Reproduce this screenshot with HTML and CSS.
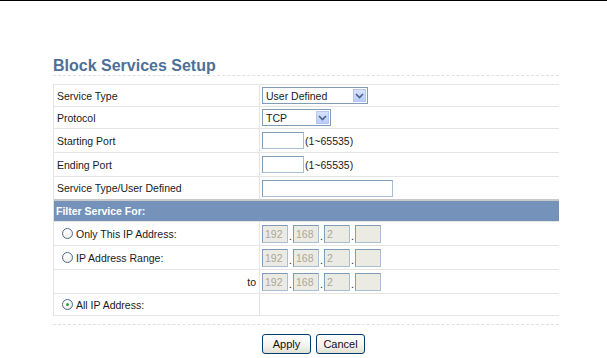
FILE: index.html
```html
<!DOCTYPE html>
<html lang="en">
<head>
  <meta charset="UTF-8" />
  <title>Block Services Setup</title>
  <link rel="stylesheet" href="styles.css">
</head>
<body>

  <div class="page">
    <h1 class="title">Block Services Setup</h1>

    <div class="form">
      <div class="row">
        <div class="label">Service Type</div>
        <div class="field">
          <span class="select-wrap wide">
            <select class="select"><option>User Defined</option></select>
            <span class="arrow"><svg width="9" height="6" viewBox="0 0 9 6"><path d="M1 1 L4.5 4.5 L8 1" fill="none" stroke="#4d6185" stroke-width="1.6"/></svg></span>
          </span>
        </div>
      </div>
      <div class="row">
        <div class="label">Protocol</div>
        <div class="field">
          <span class="select-wrap narrow">
            <select class="select"><option>TCP</option></select>
            <span class="arrow"><svg width="9" height="6" viewBox="0 0 9 6"><path d="M1 1 L4.5 4.5 L8 1" fill="none" stroke="#4d6185" stroke-width="1.6"/></svg></span>
          </span>
        </div>
      </div>
      <div class="row tall">
        <div class="label">Starting Port</div>
        <div class="field"><input class="text port" type="text"><span class="hint">(1~65535)</span></div>
      </div>
      <div class="row tall">
        <div class="label">Ending Port</div>
        <div class="field"><input class="text port" type="text"><span class="hint">(1~65535)</span></div>
      </div>
      <div class="row tall last">
        <div class="label">Service Type/User Defined</div>
        <div class="field"><input class="text long" type="text"></div>
      </div>

      <div class="band">Filter Service For:</div>

      <div class="row tall">
        <div class="label"><span class="radio"></span>Only This IP Address:</div>
        <div class="field ip">
          <input class="octet" value="192" disabled><span class="dot">.</span>
          <input class="octet" value="168" disabled><span class="dot">.</span>
          <input class="octet" value="2" disabled><span class="dot">.</span>
          <input class="octet" value="" disabled>
        </div>
      </div>
      <div class="row tall">
        <div class="label"><span class="radio"></span>IP Address Range:</div>
        <div class="field ip">
          <input class="octet" value="192" disabled><span class="dot">.</span>
          <input class="octet" value="168" disabled><span class="dot">.</span>
          <input class="octet" value="2" disabled><span class="dot">.</span>
          <input class="octet" value="" disabled>
        </div>
      </div>
      <div class="row tall">
        <div class="label to">to</div>
        <div class="field ip">
          <input class="octet" value="192" disabled><span class="dot">.</span>
          <input class="octet" value="168" disabled><span class="dot">.</span>
          <input class="octet" value="2" disabled><span class="dot">.</span>
          <input class="octet" value="" disabled>
        </div>
      </div>
      <div class="row">
        <div class="label"><span class="radio checked"></span>All IP Address:</div>
        <div class="field"></div>
      </div>
    </div>

    <div class="actions">
      <button class="btn">Apply</button>
      <button class="btn">Cancel</button>
    </div>
  </div>

</body>
</html>
```

FILE: styles.css
```css
body {
  margin: 0;
  border-top: 1px solid #000;
  background: #fff;
  font-family: "Liberation Sans", Arial, sans-serif;
  font-size: 10.5px;
  color: #1a1a1a;
}

.page {
  width: 506px;
  margin: 55px 0 0 53px;
}

.title {
  margin: 0;
  font-size: 16px;
  line-height: 19px;
  font-weight: bold;
  color: #4f6f98;
  border-bottom: 1px dashed #dbe1e8;
}

.form {
  margin-top: 8px;
  border-top: 1px solid #e4e4e4;
  border-left: 1px solid #e4e4e4;
}

.row {
  display: flex;
  height: 21px;
  border-bottom: 1px solid #e4e4e4;
}

.row.tall {
  height: 23px;
}

.row.last {
  height: 22px;
  border-bottom: 2px solid #c9c9c9;
}

.label {
  width: 202px;
  padding-left: 3px;
  border-right: 1px solid #e4e4e4;
  display: flex;
  align-items: center;
}

.label.to {
  justify-content: flex-end;
  padding-right: 3px;
  width: 199px;
}

.field {
  flex: 1;
  padding-left: 2px;
  display: flex;
  align-items: center;
}

.select-wrap {
  position: relative;
  display: inline-block;
  height: 17px;
}

.select-wrap.wide { width: 106px; }
.select-wrap.narrow { width: 69px; }

.select {
  appearance: none;
  -webkit-appearance: none;
  width: 100%;
  height: 17px;
  margin: 0;
  padding: 0 0 0 3px;
  border: 1px solid #7f9db9;
  border-radius: 0;
  background: #fff;
  font-family: inherit;
  font-size: 10.5px;
  color: #1a1a1a;
  box-sizing: border-box;
}

.arrow {
  position: absolute;
  top: 2px;
  right: 2px;
  width: 13px;
  height: 13px;
  background: linear-gradient(#d6e2fe, #b9cdfa);
  border: 1px solid #b5c7ef;
  box-sizing: border-box;
  display: flex;
  align-items: center;
  justify-content: center;
}

.text {
  height: 17px;
  margin: 0;
  padding: 0 2px;
  border: 1px solid #7f9db9;
  border-right-color: #a9bdd4;
  border-bottom-color: #a9bdd4;
  box-sizing: border-box;
  font-family: inherit;
  font-size: 10.5px;
}

.text.port { width: 42px; }
.text.long { width: 131px; }

.hint {
  padding-left: 1px;
}

.band {
  height: 20px;
  padding-left: 2px;
  background: #7592bb;
  color: #fff;
  font-weight: bold;
  display: flex;
  align-items: center;
  border-bottom: 1px solid #e4e4e4;
}

.radio {
  width: 11px;
  height: 11px;
  margin: 0 3px 0 5px;
  border: 1px solid #4f6b8c;
  border-radius: 50%;
  background: radial-gradient(circle at 40% 35%, #fff 30%, #dedcd3 100%);
  box-sizing: border-box;
  position: relative;
}

.radio.checked::after {
  content: "";
  position: absolute;
  left: 3px;
  top: 3px;
  width: 3px;
  height: 3px;
  border-radius: 50%;
  background: #2aa52a;
}

.ip .octet {
  width: 26px;
  height: 18px;
  margin: 0;
  padding: 0 2px;
  border: 1px solid #7f9db9;
  border-right-color: #a9bdd4;
  border-bottom-color: #a9bdd4;
  background: #ebebe4;
  color: #aca899;
  font-family: inherit;
  font-size: 10.5px;
  box-sizing: border-box;
}

.ip .dot {
  width: 5px;
  text-align: center;
  align-self: flex-end;
  padding-bottom: 3px;
}

.actions {
  margin-top: 8px;
  border-top: 1px dashed #dbe1e8;
  padding: 9px 0 0 209px;
  display: flex;
  gap: 5px;
}

.btn {
  width: 49px;
  height: 20px;
  margin: 0;
  padding: 0;
  border: 1px solid #003c74;
  border-radius: 3px;
  background: linear-gradient(#ffffff, #f3f2ec 60%, #e3e0d2);
  font-family: inherit;
  font-size: 11px;
  color: #111;
}
```
